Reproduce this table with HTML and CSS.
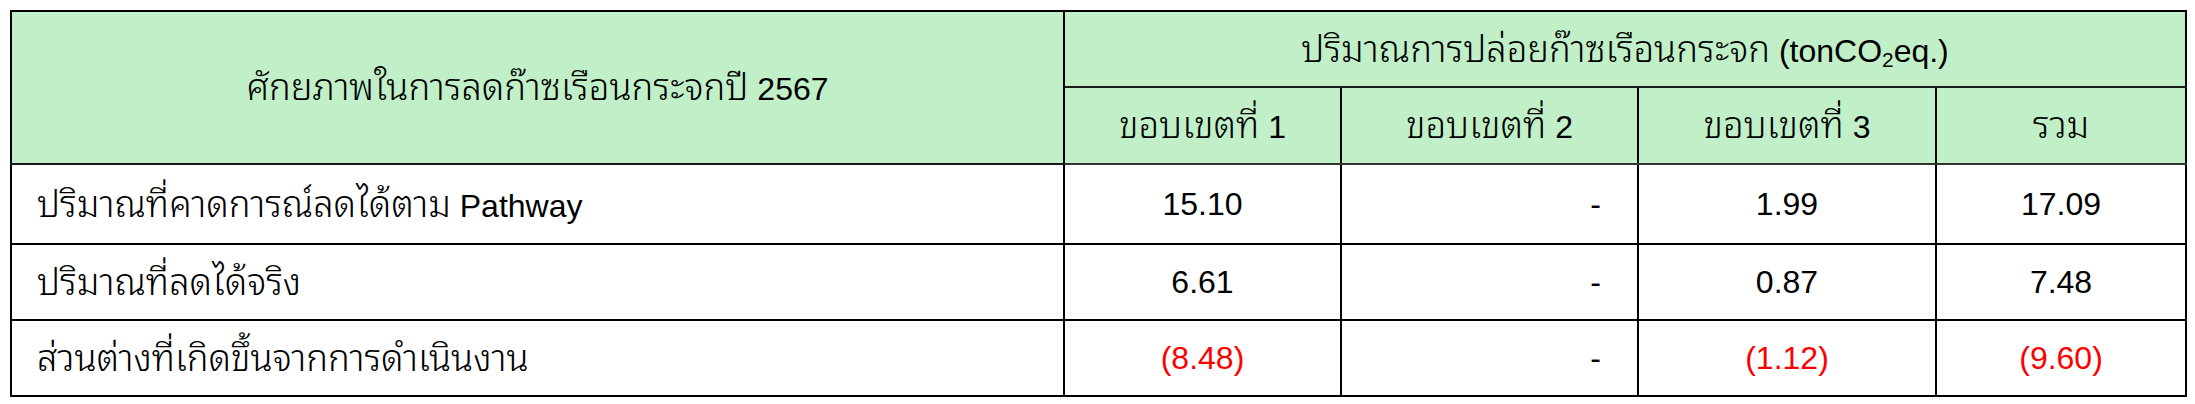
FILE: index.html
```html
<!DOCTYPE html>
<html lang="th">
<head>
<meta charset="utf-8">
<title>ศักยภาพในการลดก๊าซเรือนกระจกปี 2567</title>
<link rel="stylesheet" href="styles.css">
</head>
<body>
<div class="wrap">
<table class="ghg">
  <colgroup>
    <col class="c-label">
    <col class="c-s1">
    <col class="c-s2">
    <col class="c-s3">
    <col class="c-sum">
  </colgroup>
  <thead>
    <tr class="h1">
      <th rowspan="2"><span class="th">ศักยภาพในการลดก๊าซเรือนกระจกปี</span> 2567</th>
      <th colspan="4"><span class="th">ปริมาณการปล่อยก๊าซเรือนกระจก</span> (tonCO<sub>2</sub>eq.)</th>
    </tr>
    <tr class="h2">
      <th><span class="th">ขอบเขตที่</span> 1</th>
      <th><span class="th">ขอบเขตที่</span> 2</th>
      <th><span class="th">ขอบเขตที่</span> 3</th>
      <th><span class="th">รวม</span></th>
    </tr>
  </thead>
  <tbody>
    <tr class="r1">
      <td class="label"><span class="th">ปริมาณที่คาดการณ์ลดได้ตาม</span> Pathway</td>
      <td class="num">15.10</td>
      <td class="dash">-</td>
      <td class="num">1.99</td>
      <td class="num">17.09</td>
    </tr>
    <tr class="r2">
      <td class="label"><span class="th">ปริมาณที่ลดได้จริง</span></td>
      <td class="num">6.61</td>
      <td class="dash">-</td>
      <td class="num">0.87</td>
      <td class="num">7.48</td>
    </tr>
    <tr class="r3">
      <td class="label"><span class="th">ส่วนต่างที่เกิดขึ้นจากการดำเนินงาน</span></td>
      <td class="num neg">(8.48)</td>
      <td class="dash">-</td>
      <td class="num neg">(1.12)</td>
      <td class="num neg">(9.60)</td>
    </tr>
  </tbody>
</table>
</div>
</body>
</html>
```

FILE: styles.css
```css
html, body {
  margin: 0;
  padding: 0;
  background: #ffffff;
}

.wrap {
  padding: 10px 0 0 10px;
}

.ghg {
  border-collapse: collapse;
  table-layout: fixed;
  width: 2175px;
  font-family: "Liberation Sans", "Noto Sans Thai Looped", "Noto Sans Thai", "Noto Sans", sans-serif;
  font-size: 32px;
  color: #000000;
}

.th {
  font-family: "Noto Sans Thai Looped", "Noto Sans Thai", "Noto Sans", sans-serif;
  font-size: 1.14em;
  font-weight: 300;
  line-height: 1;
}

.c-label { width: 1053px; }
.c-s1 { width: 277px; }
.c-s2 { width: 297px; }
.c-s3 { width: 298px; }
.c-sum { width: 250px; }

.ghg th,
.ghg td {
  border: 2px solid #000000;
  padding: 0;
  vertical-align: middle;
  line-height: 1.2;
}

.ghg th {
  background: #c1f0c8;
  font-weight: normal;
  text-align: center;
}

.ghg thead tr.h1 th { border-bottom-color: #1a1a1a; }
.ghg thead tr.h2 th { border-bottom-color: #333333; }

.h1 { height: 76px; }
.h2 { height: 77px; }
.r1 { height: 80px; }
.r2 { height: 76px; }
.r3 { height: 76px; }

.ghg sub {
  font-size: 0.65em;
  vertical-align: -0.25em;
  line-height: 0;
}

.label {
  text-align: left;
  padding-left: 25px !important;
}

.num {
  text-align: center;
}

.dash {
  text-align: right;
  padding-right: 36px !important;
}

.neg {
  color: #ff0000;
}
```
